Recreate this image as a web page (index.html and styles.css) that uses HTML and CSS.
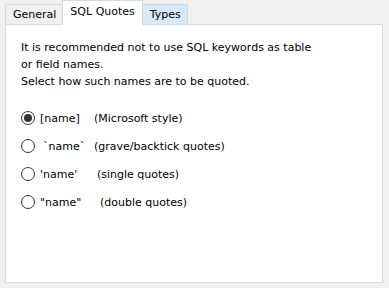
FILE: index.html
```html
<!DOCTYPE html>
<html lang="en">
<head>
  <meta charset="UTF-8">
  <title>SQL Quotes</title>
  <link rel="stylesheet" href="styles.css">
</head>
<body>
  <div class="dialog">
    <div class="tabs">
      <div class="tab">General</div>
      <div class="tab active">SQL Quotes</div>
      <div class="tab hover">Types</div>
    </div>
    <div class="panel">
      <p class="intro">It is recommended not to use SQL keywords as table<br>or field names.<br>Select how such names are to be quoted.</p>
      <div class="options">
        <label class="option">
          <span class="radio checked"></span>
          <span class="name">[name]</span><span class="hint">(Microsoft style)</span>
        </label>
        <label class="option">
          <span class="radio"></span>
          <span class="name tick">`name`</span><span class="hint">(grave/backtick quotes)</span>
        </label>
        <label class="option">
          <span class="radio"></span>
          <span class="name single">'name'</span><span class="hint">(single quotes)</span>
        </label>
        <label class="option">
          <span class="radio"></span>
          <span class="name double">"name"</span><span class="hint">(double quotes)</span>
        </label>
      </div>
    </div>
  </div>
</body>
</html>
```

FILE: styles.css
```css
body {
  margin: 0;
  background: #f0f0f0;
  font-family: "DejaVu Sans", Tahoma, sans-serif;
  font-size: 11px;
  color: #000;
}

.dialog {
  padding: 0 6px 5px 5px;
  height: 288px;
  box-sizing: border-box;
  display: flex;
  flex-direction: column;
}

/* Tabs */
.tabs {
  display: flex;
  align-items: flex-end;
  height: 24px;
}

.tab {
  height: 20px;
  box-sizing: border-box;
  padding: 3px 6px 0 7px;
  border: 1px solid #d9d9d9;
  border-bottom: none;
  background: #f0f0f0;
  margin-right: -1px;
}

.tab.active {
  height: 25px;
  padding-top: 4px;
  background: #fff;
  position: relative;
  z-index: 1;
  margin-bottom: -1px;
  padding-left: 7px;
  padding-right: 7px;
}

.tab.hover {
  background: #d8eaf9;
  border-color: #c5dbef;
}

/* Panel */
.panel {
  flex: 1;
  background: #fff;
  border: 1px solid #d9d9d9;
  padding: 14px 15px;
}

.intro {
  margin: 0 0 20px;
  line-height: 17px;
}

.options {
  display: flex;
  flex-direction: column;
  gap: 12px;
}

.option {
  display: flex;
  align-items: center;
  height: 16px;
}

.radio {
  width: 14px;
  height: 14px;
  box-sizing: border-box;
  border: 1px solid #333;
  border-radius: 50%;
  margin-right: 5px;
  display: flex;
  align-items: center;
  justify-content: center;
}

.radio.checked::after {
  content: "";
  width: 8px;
  height: 8px;
  border-radius: 50%;
  background: #333;
}

.name {
  width: 54px;
}

.name.tick {
  padding-left: 3px;
  width: 51px;
}

.name.single {
  width: 57px;
}

.name.double {
  width: 60px;
}
```
